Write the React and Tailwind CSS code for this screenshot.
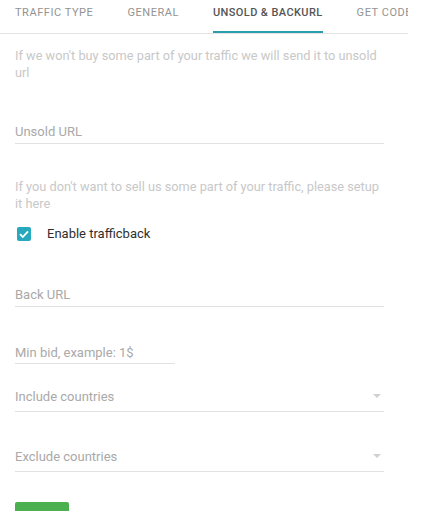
import React from "react";

const tabs = ["Traffic type", "General", "Unsold & backurl", "Get code"];

function Field({ label, className = "", pb = "pb-[3px]", arrow = false }) {
  return (
    <div className={`flex items-center justify-between border-b border-[#e2e2e2] ${pb} ${className}`}>
      <span className="h-[16px] text-[13px] leading-[16px] text-[#a9a9a9]">{label}</span>
      {arrow && (
        <span className="mr-[3px] mb-[2px] h-0 w-0 border-x-[4px] border-t-[4px] border-x-transparent border-t-[#d0d0d0]" />
      )}
    </div>
  );
}

export default function App() {
  return (
    <div className="h-[511px] w-[422px] overflow-hidden bg-white font-['Roboto',sans-serif]">
      <div className="flex h-[34px] w-[408px] gap-[34px] overflow-hidden border-b border-[#e3e3e3] pl-[15px]">
        {tabs.map((t, i) => (
          <div
            key={t}
            className={`h-[34px] shrink-0 whitespace-nowrap pt-[6px] text-[11px] uppercase leading-[14px] ${
              i === 2
                ? "border-b-[3px] border-[#2a9fad] font-medium tracking-[0.4px] text-[#555]"
                : "tracking-[0.55px] text-[#939393]"
            }`}
          >
            {t}
          </div>
        ))}
      </div>

      <div className="flex w-[384px] flex-col pl-[15px]">
        <p className="mt-[13px] text-[12.75px] leading-[17px] text-[#c8c8c8]">
          If we won't buy some part of your traffic we will send it to unsold url
        </p>

        <Field label="Unsold URL" className="mt-[43px]" />

        <p className="mt-[34px] text-[12.75px] leading-[17px] text-[#c8c8c8]">
          If you don't want to sell us some part of your traffic, please setup it here
        </p>

        <label className="mt-[13px] flex h-[18px] items-center gap-[16px] pl-[2px]">
          <span className="flex h-[14px] w-[14px] items-center justify-center rounded-[2px] bg-[#26a9bd]">
            <svg viewBox="0 0 14 14" className="h-[14px] w-[14px]">
              <path d="M3 7.2 L5.8 10 L11 4.3" fill="none" stroke="#fff" strokeWidth="1.8" />
            </svg>
          </span>
          <span className="text-[13px] text-[#2f2f2f]">Enable trafficback</span>
        </label>

        <Field label="Back URL" className="mt-[44px]" />

        <Field label="Min bid, example: 1$" className="mt-[38px] w-[160px]" pb="pb-[2px]" />

        <Field label="Include countries" className="mt-[25px]" pb="pb-[6px]" arrow />

        <Field label="Exclude countries" className="mt-[37px]" pb="pb-[6px]" arrow />

        <button className="mt-[30px] h-[30px] w-[54px] rounded-[2px] bg-[#4caf50]" />
      </div>
    </div>
  );
}
